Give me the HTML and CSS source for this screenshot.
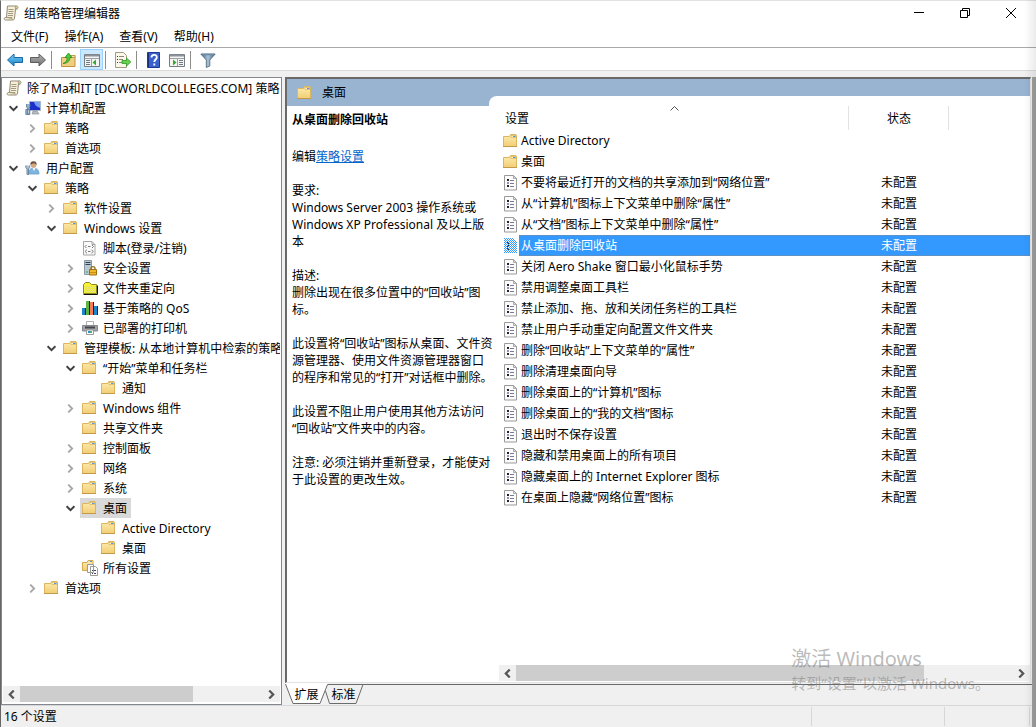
FILE: index.html
```html
<!DOCTYPE html>
<html lang="zh-CN">

<head>
  <meta charset="UTF-8">
  <meta name="viewport" content="width=device-width, initial-scale=1.0">
  <title>组策略管理编辑器</title>
  <link rel="stylesheet" href="styles.css">
</head>

<body>
  <!-- icon definitions -->
  <svg class="defs" aria-hidden="true">
    <defs>
      <linearGradient id="gFolder" x1="0" y1="0" x2="0" y2="1">
        <stop offset="0" stop-color="#fdedb0" />
        <stop offset="1" stop-color="#f2cd74" />
      </linearGradient>
      <linearGradient id="gBack" x1="0" y1="0" x2="0" y2="1">
        <stop offset="0" stop-color="#7fd0f5" />
        <stop offset="1" stop-color="#0f7fc4" />
      </linearGradient>
      <linearGradient id="gFwd" x1="0" y1="0" x2="0" y2="1">
        <stop offset="0" stop-color="#b5b5b5" />
        <stop offset="1" stop-color="#6f6f6f" />
      </linearGradient>
      <linearGradient id="gFilter" x1="0" y1="0" x2="1" y2="0">
        <stop offset="0" stop-color="#3f5f7d" />
        <stop offset="0.5" stop-color="#a9c3d8" />
        <stop offset="1" stop-color="#3f5f7d" />
      </linearGradient>
    </defs>
    <symbol id="scroll" viewBox="0 0 16 16">
      <path d="M4.500 1h9c2 0 2 3 0 3h-1l-1 9c0 1.500-1 2-2 2h-7c-2 0-1.500-2.500 0-2.500h1z" fill="#f7efd6" stroke="#8f8a78" />
      <path d="M13.500 1c-1.500 0-1.500 3-.5 3h1.500M2.500 12.500h6.500c-.5 1 0 2 .5 2.500" fill="#d8c690" stroke="#8f8a78" stroke-width=".8" />
      <path d="M5.500 4.500h5M5.500 6.500h5M5 8.500h5M5 10.500h5" stroke="#a09a86" />
    </symbol>
    <symbol id="folder" viewBox="0 0 16 16">
      <path d="M.5 3.500h6l1-2h5.500l.5 1v11H.5z" fill="url(#gFolder)" stroke="#dcb560" />
      <path d="M8 2.500h5v2H8z" fill="#fff3c9" stroke="#d3a84e" stroke-width=".6" />
      <path d="M10 3h2.500v1H10z" fill="#4a9be0" />
      <path d="M0 13.500h14" stroke="#c39a4a" />
    </symbol>
    <symbol id="doc" viewBox="0 0 14 16">
      <path d="M.5.500h9l3 3v11.500H.5z" fill="#fbfbfb" stroke="#9a9a9a" />
      <path d="M9.500.5v3h3z" fill="#ddd" stroke="#9a9a9a" stroke-width=".8" />
      <path d="M3 4h2v2H3zM3 10h2v2H3z" fill="#222" />
      <path d="M3 7h2v2H3z" fill="#9090b0" />
      <path d="M6 5.500h4M6 8.500h4M6 11.500h4" stroke="#777a98" />
    </symbol>
    <symbol id="docSel" viewBox="0 0 14 16">
      <path d="M0 0h10l3 3v12H0z" fill="#fff" />
      <path d="M3 4h2v2H3zM3 7h2v2H3zM3 10h2v2H3z" fill="#124" />
      <path d="M0 .5h10M0 2.500h12M0 4.500h13M0 6.500h13M0 8.500h13M0 10.500h13M0 12.500h13M0 14.500h13M1 1.500h10M1 3.500h12M1 5.500h12M1 7.500h12M1 9.500h12M1 11.500h12M1 13.500h12" stroke="#3399ff" stroke-dasharray="1 1" shape-rendering="crispEdges" />
    </symbol>
    <symbol id="computer" viewBox="0 0 16 16">
      <path d="M4.500 1.500h11v9h-11z" fill="#1c2fcb" stroke="#a8b4c8" />
      <path d="M9 2h6v6c-2-1-5-2-6-6z" fill="#6f9cf4" />
      <path d="M8 11h4l2 3H7z" fill="#b7bcc3" stroke="#7f8790" stroke-width=".6" />
      <path d="M1.500 4v3l1 1v6h1.500V8l1-1V4M.8 9.500h4v5h-4z" fill="#8fb3cf" stroke="#57758f" stroke-width=".8" />
    </symbol>
    <symbol id="user" viewBox="0 0 16 16">
      <path d="M4 14c0-5 2-6 4.500-6S14 9.500 14 14z" fill="#7db4e2" stroke="#6c9cc6" stroke-width=".8" />
      <path d="M7.500 8L9 11l1.500-3z" fill="#fff" />
      <circle cx="8.500" cy="5" r="2.800" fill="#d9a87b" />
      <path d="M5.500 5C5 2 7 1.200 8.500 1.300c2.500 0 3.500 1.500 3 4-1-2-3-2.500-6-.3z" fill="#6d5546" />
      <path d="M.8 5.500v2L2 9v5.500h1.500V9l1.200-1.500v-2" fill="#a7c2d8" stroke="#5f7f99" stroke-width=".9" />
    </symbol>
    <symbol id="script" viewBox="0 0 16 16">
      <path d="M1.500 1.500h8.500l3 3v10.500H1.500z" fill="#fafafa" stroke="#a4a4a4" />
      <path d="M10 1.500v3h3" fill="none" stroke="#a4a4a4" />
      <path d="M4.500 5L3 6.500 4.500 8M10 5l1.500 1.500L10 8M6 6.500h2.500M5 10c-2 0-2 3 0 3M9.500 10c2 0 2 3 0 3M6 11.500h2.500" fill="none" stroke="#777" />
    </symbol>
    <symbol id="security" viewBox="0 0 16 16">
      <path d="M2.500.5h7v14h-7z" fill="#b9c8d2" stroke="#8b99a3" />
      <path d="M3.500 2.500h5M3.500 4.500h5" stroke="#2f4554" />
      <path d="M4 12h2" stroke="#3ea33e" />
      <path d="M9 10V8.500c0-2.500 4-2.500 4 0V10" fill="none" stroke="#8c6a14" stroke-width="1.300" />
      <path d="M7.500 9.500h7v5.500h-7z" fill="#f0b92c" stroke="#a0700f" />
      <path d="M8 12.500h6" stroke="#c98f18" />
    </symbol>
    <symbol id="redirect" viewBox="0 0 16 16">
      <path d="M1.500 13.500v-9l2-2h4l2 2h5v9z" fill="#f6f03a" stroke="#8a8a20" />
      <path d="M3 6.500h11M3 8.500h11M3 10.500h11M3 12.500h11M4 7.500h10M4 9.500h10M4 11.500h10" stroke="#dcdc78" stroke-dasharray="1 1" shape-rendering="crispEdges" />
      <path d="M1.500 14.500h14v-9" fill="none" stroke="#111" />
    </symbol>
    <symbol id="qos" viewBox="0 0 16 16">
      <path d="M0 8h4v7H0z" fill="#1b87c9" />
      <path d="M4 1h4v14H4z" fill="#5cb543" />
      <path d="M8 2h4v13H8z" fill="#f47b54" />
      <path d="M12 6h4v9h-4z" fill="#1b87c9" />
      <path d="M3.500 8v7M7.500 1v14M11.500 2v13M15.500 6v9" stroke="#222" />
    </symbol>
    <symbol id="printer" viewBox="0 0 16 16">
      <path d="M4.500 1.500h7v4h-7z" fill="#fff" stroke="#b0b0b0" />
      <path d="M.5 5.500h15v5.500H.5z" fill="#a1a5a9" stroke="#85898d" />
      <path d="M3 7.500h10" stroke="#43474b" stroke-width="2" />
      <path d="M4.500 10h7v4.500h-7z" fill="#fff" stroke="#9a9a9a" />
      <path d="M6 11h2v2H6z" fill="#2f8fd5" />
      <path d="M8 11h2v2H8z" fill="#46b07c" />
    </symbol>
    <symbol id="allSettings" viewBox="0 0 16 16">
      <path d="M.5 2.500H5l1-2h5v10H.5z" fill="url(#gFolder)" stroke="#d3a84e" />
      <path d="M8 1.500h2" stroke="#4a9be0" />
      <path d="M5.500 4.500h6v8h-6zM8.500 6.500h5l2 2v7h-7z" fill="#fff" stroke="#9a9a9a" />
      <path d="M10 10.500h1M12 10.500h2M10 13.500h1M12 13.500h2" stroke="#445" />
    </symbol>
    <symbol id="open" viewBox="0 0 8 8">
      <path d="M.5 2L4 5.500 7.500 2" fill="none" stroke="#404040" stroke-width="1.800" />
    </symbol>
    <symbol id="closed" viewBox="0 0 8 8">
      <path d="M2 .5L5.500 4 2 7.500" fill="none" stroke="#a6a6a6" stroke-width="1.600" />
    </symbol>
    <symbol id="left" viewBox="0 0 8 8">
      <path d="M6 .5L2.500 4 6 7.500" fill="none" stroke="#555" stroke-width="2" />
    </symbol>
    <symbol id="right" viewBox="0 0 8 8">
      <path d="M2 .5L5.500 4 2 7.500" fill="none" stroke="#555" stroke-width="2" />
    </symbol>
  </svg>

  <header class="titlebar">
    <svg class="icon"><use href="#scroll" /></svg>
    <h1>组策略管理编辑器</h1>
    <div class="window-buttons">
      <button aria-label="最小化"><svg class="glyph" viewBox="0 0 12 12"><path d="M1 5.500h10" stroke="#000" /></svg></button>
      <button aria-label="向下还原"><svg class="glyph" viewBox="0 0 12 12"><path d="M1.500 3.500h7v7h-7zM3.500 3.500v-2h7v7h-2" fill="none" stroke="#000" /></svg></button>
      <button aria-label="关闭"><svg class="glyph" viewBox="0 0 12 12"><path d="M1 1l10 10M11 1L1 11" stroke="#000" /></svg></button>
    </div>
  </header>

  <nav class="menubar">
    <button>文件(F)</button>
    <button>操作(A)</button>
    <button>查看(V)</button>
    <button>帮助(H)</button>
  </nav>

  <div class="toolbar">
    <button aria-label="后退"><svg class="icon" viewBox="0 0 16 16"><path d="M.5 8L7 2v3.500h8.500v5H7V14z" fill="url(#gBack)" stroke="#1668a8" /></svg></button>
    <button aria-label="前进"><svg class="icon" viewBox="0 0 16 16"><path d="M15.500 8L9 2v3.500H.5v5H9V14z" fill="url(#gFwd)" stroke="#5c5c5c" /></svg></button>
    <span class="sep"></span>
    <button aria-label="上移一级"><svg class="icon" viewBox="0 0 16 16"><path d="M.5 5.500h6l1-2h6.500v11H.5z" fill="#efcf7f" stroke="#c0923c" /><path d="M8.500 3.500h5.500v2H8.500z" fill="#f8e5ae" stroke="#b98a3a" stroke-width=".7" /><path d="M2 11.500c3-1 4.500-3 4-6H4L7.500 1 11 5.500H9C9 9 6 11.500 2 11.500z" fill="#4fc93a" stroke="#1f8f1f" stroke-width=".8" /></svg></button>
    <button class="active" aria-label="显示控制台树"><svg class="icon" viewBox="0 0 16 16"><path d="M.5 2.500h15v12H.5z" fill="#f5f5f2" stroke="#777c82" /><path d="M1 3.500h14" stroke="#8a929a" stroke-width="2" /><path d="M1 6.500h14M7.500 7v7" stroke="#9aa0a6" /><path d="M2 8.500h4M2 10.500h4M2 12.500h4" stroke="#6d7a87" /><path d="M12 7.500v6L8.500 10.500z" fill="#32a832" /></svg></button>
    <span class="sep"></span>
    <button aria-label="导出列表"><svg class="icon" viewBox="0 0 16 16"><path d="M.5.5h8l3 3v12H.5z" fill="#fbf8ea" stroke="#a49c82" /><path d="M2 4.500h1M2 7.500h1M2 10.500h1" stroke="#333" /><path d="M4 4.500h5M4 7.500h4M4 10.500h3" stroke="#8b8770" /><path d="M7 8.500h4.500V6L15.800 10l-4.300 4v-2.500H7z" fill="#6bd04f" stroke="#2f9a27" stroke-width=".8" /></svg></button>
    <span class="sep"></span>
    <button aria-label="帮助"><svg class="icon" viewBox="0 0 16 16"><path d="M1.500.5h12v15h-12z" fill="#3b62cc" stroke="#1d3b96" /><path d="M2.500 1v14" stroke="#1a2f80" /><path d="M5.500 5.500C5.500 2 10.800 2 10.800 5.200c0 2.300-2.500 2.300-2.500 4.800M8.300 11.500v2" fill="none" stroke="#fff" stroke-width="1.800" /></svg></button>
    <button aria-label="显示操作窗格"><svg class="icon" viewBox="0 0 16 16"><path d="M.5 2.500h15v12H.5z" fill="#f5f5f2" stroke="#777c82" /><path d="M1 3.500h14" stroke="#8a929a" stroke-width="2" /><path d="M1 6.500h14M8.500 7v7" stroke="#9aa0a6" /><path d="M10 8.500h4M10 10.500h4M10 12.500h4" stroke="#6d7a87" /><path d="M4 7.500v6l3.500-3z" fill="#32a832" /></svg></button>
    <span class="sep"></span>
    <button aria-label="筛选器"><svg class="icon" viewBox="0 0 16 16"><path d="M.8 2h14.400L9.800 8v6l-3.500 1.500V8z" fill="url(#gFilter)" stroke="#4a6379" stroke-width=".8" /><path d="M2 2.500h12" stroke="#6c8ba5" stroke-width="1.500" /></svg></button>
  </div>

  <div class="frame">
    <div class="content">
      <main class="panes">
        <section class="tree-pane">
          <div class="tree">
            <div class="row"><span class="node"><svg class="icon"><use href="#scroll" /></svg>除了Ma和IT [DC.WORLDCOLLEGES.COM] 策略</span></div>
            <ul>
              <li>
                <div class="row"><button class="twisty" aria-label="折叠"><svg><use href="#open" /></svg></button><span class="node"><svg class="icon"><use href="#computer" /></svg>计算机配置</span></div>
                <ul>
                  <li><div class="row"><button class="twisty" aria-label="展开"><svg><use href="#closed" /></svg></button><span class="node"><svg class="icon"><use href="#folder" /></svg>策略</span></div></li>
                  <li><div class="row"><button class="twisty" aria-label="展开"><svg><use href="#closed" /></svg></button><span class="node"><svg class="icon"><use href="#folder" /></svg>首选项</span></div></li>
                </ul>
              </li>
              <li>
                <div class="row"><button class="twisty" aria-label="折叠"><svg><use href="#open" /></svg></button><span class="node"><svg class="icon"><use href="#user" /></svg>用户配置</span></div>
                <ul>
                  <li>
                    <div class="row"><button class="twisty" aria-label="折叠"><svg><use href="#open" /></svg></button><span class="node"><svg class="icon"><use href="#folder" /></svg>策略</span></div>
                    <ul>
                      <li><div class="row"><button class="twisty" aria-label="展开"><svg><use href="#closed" /></svg></button><span class="node"><svg class="icon"><use href="#folder" /></svg>软件设置</span></div></li>
                      <li>
                        <div class="row"><button class="twisty" aria-label="折叠"><svg><use href="#open" /></svg></button><span class="node"><svg class="icon"><use href="#folder" /></svg>Windows 设置</span></div>
                        <ul>
                          <li><div class="row leaf"><span class="node"><svg class="icon"><use href="#script" /></svg>脚本(登录/注销)</span></div></li>
                          <li><div class="row"><button class="twisty" aria-label="展开"><svg><use href="#closed" /></svg></button><span class="node"><svg class="icon"><use href="#security" /></svg>安全设置</span></div></li>
                          <li><div class="row"><button class="twisty" aria-label="展开"><svg><use href="#closed" /></svg></button><span class="node"><svg class="icon"><use href="#redirect" /></svg>文件夹重定向</span></div></li>
                          <li><div class="row"><button class="twisty" aria-label="展开"><svg><use href="#closed" /></svg></button><span class="node"><svg class="icon"><use href="#qos" /></svg>基于策略的 QoS</span></div></li>
                          <li><div class="row"><button class="twisty" aria-label="展开"><svg><use href="#closed" /></svg></button><span class="node"><svg class="icon"><use href="#printer" /></svg>已部署的打印机</span></div></li>
                        </ul>
                      </li>
                      <li>
                        <div class="row"><button class="twisty" aria-label="折叠"><svg><use href="#open" /></svg></button><span class="node"><svg class="icon"><use href="#folder" /></svg>管理模板: 从本地计算机中检索的策略</span></div>
                        <ul>
                          <li>
                            <div class="row"><button class="twisty" aria-label="折叠"><svg><use href="#open" /></svg></button><span class="node"><svg class="icon"><use href="#folder" /></svg>“开始”菜单和任务栏</span></div>
                            <ul>
                              <li><div class="row leaf"><span class="node"><svg class="icon"><use href="#folder" /></svg>通知</span></div></li>
                            </ul>
                          </li>
                          <li><div class="row"><button class="twisty" aria-label="展开"><svg><use href="#closed" /></svg></button><span class="node"><svg class="icon"><use href="#folder" /></svg>Windows 组件</span></div></li>
                          <li><div class="row leaf"><span class="node"><svg class="icon"><use href="#folder" /></svg>共享文件夹</span></div></li>
                          <li><div class="row"><button class="twisty" aria-label="展开"><svg><use href="#closed" /></svg></button><span class="node"><svg class="icon"><use href="#folder" /></svg>控制面板</span></div></li>
                          <li><div class="row"><button class="twisty" aria-label="展开"><svg><use href="#closed" /></svg></button><span class="node"><svg class="icon"><use href="#folder" /></svg>网络</span></div></li>
                          <li><div class="row"><button class="twisty" aria-label="展开"><svg><use href="#closed" /></svg></button><span class="node"><svg class="icon"><use href="#folder" /></svg>系统</span></div></li>
                          <li>
                            <div class="row"><button class="twisty" aria-label="折叠"><svg><use href="#open" /></svg></button><span class="node current"><svg class="icon"><use href="#folder" /></svg>桌面</span></div>
                            <ul>
                              <li><div class="row leaf"><span class="node"><svg class="icon"><use href="#folder" /></svg>Active Directory</span></div></li>
                              <li><div class="row leaf"><span class="node"><svg class="icon"><use href="#folder" /></svg>桌面</span></div></li>
                            </ul>
                          </li>
                          <li><div class="row leaf"><span class="node"><svg class="icon"><use href="#allSettings" /></svg>所有设置</span></div></li>
                        </ul>
                      </li>
                    </ul>
                  </li>
                  <li><div class="row"><button class="twisty" aria-label="展开"><svg><use href="#closed" /></svg></button><span class="node"><svg class="icon"><use href="#folder" /></svg>首选项</span></div></li>
                </ul>
              </li>
            </ul>
          </div>
          <div class="scrollbar">
            <button aria-label="向左滚动"><svg><use href="#left" /></svg></button>
            <div class="track"><div class="thumb" style="width: 71%"></div></div>
            <button aria-label="向右滚动"><svg><use href="#right" /></svg></button>
          </div>
        </section>

        <section class="result-pane">
          <div class="view">
            <h2 class="banner"><svg class="icon"><use href="#folder" /></svg>桌面</h2>
            <div class="split">
              <article class="details">
                <h3>从桌面删除回收站</h3>
                <p class="edit">编辑<a href="#">策略设置</a></p>
                <p>要求:<br>Windows Server 2003 操作系统或<br>Windows XP Professional 及以上版<br>本</p>
                <p>描述:<br>删除出现在很多位置中的“回收站”图<br>标。</p>
                <p>此设置将“回收站”图标从桌面、文件资<br>源管理器、使用文件资源管理器窗口<br>的程序和常见的“打开”对话框中删除。</p>
                <p>此设置不阻止用户使用其他方法访问<br>“回收站”文件夹中的内容。</p>
                <p>注意: 必须注销并重新登录，才能使对<br>于此设置的更改生效。</p>
              </article>
              <div class="list-pane">
                <table>
                  <colgroup>
                    <col class="col-name">
                    <col class="col-state">
                    <col>
                  </colgroup>
                  <thead>
                    <tr>
                      <th>设置<svg class="sort" viewBox="0 0 9 5"><path d="M.5 4.500l4-4 4 4" fill="none" stroke="#555" /></svg></th>
                      <th class="state">状态</th>
                      <th></th>
                    </tr>
                  </thead>
                  <tbody>
                    <tr><td><div class="name"><svg class="icon"><use href="#folder" /></svg><span>Active Directory</span></div></td><td class="state"></td><td></td></tr>
                    <tr><td><div class="name"><svg class="icon"><use href="#folder" /></svg><span>桌面</span></div></td><td class="state"></td><td></td></tr>
                    <tr><td><div class="name"><svg class="icon"><use href="#doc" /></svg><span>不要将最近打开的文档的共享添加到“网络位置”</span></div></td><td class="state">未配置</td><td></td></tr>
                    <tr><td><div class="name"><svg class="icon"><use href="#doc" /></svg><span>从“计算机”图标上下文菜单中删除“属性”</span></div></td><td class="state">未配置</td><td></td></tr>
                    <tr><td><div class="name"><svg class="icon"><use href="#doc" /></svg><span>从“文档”图标上下文菜单中删除“属性”</span></div></td><td class="state">未配置</td><td></td></tr>
                    <tr class="selected"><td><div class="name"><svg class="icon"><use href="#docSel" /></svg><span>从桌面删除回收站</span></div></td><td class="state">未配置</td><td></td></tr>
                    <tr><td><div class="name"><svg class="icon"><use href="#doc" /></svg><span>关闭 Aero Shake 窗口最小化鼠标手势</span></div></td><td class="state">未配置</td><td></td></tr>
                    <tr><td><div class="name"><svg class="icon"><use href="#doc" /></svg><span>禁用调整桌面工具栏</span></div></td><td class="state">未配置</td><td></td></tr>
                    <tr><td><div class="name"><svg class="icon"><use href="#doc" /></svg><span>禁止添加、拖、放和关闭任务栏的工具栏</span></div></td><td class="state">未配置</td><td></td></tr>
                    <tr><td><div class="name"><svg class="icon"><use href="#doc" /></svg><span>禁止用户手动重定向配置文件文件夹</span></div></td><td class="state">未配置</td><td></td></tr>
                    <tr><td><div class="name"><svg class="icon"><use href="#doc" /></svg><span>删除“回收站”上下文菜单的“属性”</span></div></td><td class="state">未配置</td><td></td></tr>
                    <tr><td><div class="name"><svg class="icon"><use href="#doc" /></svg><span>删除清理桌面向导</span></div></td><td class="state">未配置</td><td></td></tr>
                    <tr><td><div class="name"><svg class="icon"><use href="#doc" /></svg><span>删除桌面上的“计算机”图标</span></div></td><td class="state">未配置</td><td></td></tr>
                    <tr><td><div class="name"><svg class="icon"><use href="#doc" /></svg><span>删除桌面上的“我的文档”图标</span></div></td><td class="state">未配置</td><td></td></tr>
                    <tr><td><div class="name"><svg class="icon"><use href="#doc" /></svg><span>退出时不保存设置</span></div></td><td class="state">未配置</td><td></td></tr>
                    <tr><td><div class="name"><svg class="icon"><use href="#doc" /></svg><span>隐藏和禁用桌面上的所有项目</span></div></td><td class="state">未配置</td><td></td></tr>
                    <tr><td><div class="name"><svg class="icon"><use href="#doc" /></svg><span>隐藏桌面上的 Internet Explorer 图标</span></div></td><td class="state">未配置</td><td></td></tr>
                    <tr><td><div class="name"><svg class="icon"><use href="#doc" /></svg><span>在桌面上隐藏“网络位置”图标</span></div></td><td class="state">未配置</td><td></td></tr>
                  </tbody>
                </table>
                <div class="scrollbar">
                  <button aria-label="向左滚动"><svg><use href="#left" /></svg></button>
                  <div class="track"><div class="thumb" style="width: 82%"></div></div>
                  <button aria-label="向右滚动"><svg><use href="#right" /></svg></button>
                </div>
              </div>
            </div>
          </div>
          <div class="tabs">
            <svg class="tab-shape" viewBox="0 0 80 22">
              <path d="M0 0h43L35 20H8z" fill="#fff" />
              <path d="M.5 1l7.500 19.500h27L42.500 1.500H80" fill="none" stroke="#6b6b6b" />
              <path d="M40.500 8l4 12.500H71L78 1.500" fill="none" stroke="#6b6b6b" />
            </svg>
            <button>扩展</button>
            <button>标准</button>
          </div>
        </section>
      </main>

      <footer class="statusbar">
        <span class="message">16 个设置</span>
        <span class="cell wide"></span>
        <span class="cell"></span>
      </footer>
    </div>
    <div class="edge"></div>
  </div>

  <div class="watermark">
    <p class="big">激活 Windows</p>
    <p>转到“设置”以激活 Windows。</p>
  </div>
</body>

</html>
```

FILE: styles.css
```css
* {
  margin: 0;
  padding: 0;
  box-sizing: border-box;
}

body {
  display: flex;
  flex-direction: column;
  height: 100vh;
  overflow: hidden;
  border-top: 1px solid #e2e2e2;
  border-left: 1px solid #666;
  background: #fff;
  color: #000;
  font-family: "Noto Sans", "Noto Sans CJK SC", sans-serif;
  font-size: 12px;
  line-height: 17px;
}

/* soft shadow along the right side */
body::after {
  content: "";
  position: fixed;
  top: 0;
  right: 0;
  bottom: 0;
  width: 12px;
  background: linear-gradient(to right, transparent, rgba(0, 0, 0, 0.08));
  pointer-events: none;
}

button {
  display: flex;
  align-items: center;
  justify-content: center;
  border: none;
  background: none;
  color: inherit;
  font: inherit;
}

ul {
  list-style: none;
}

h1,
h2 {
  font-size: 12px;
  font-weight: 400;
}

.defs {
  position: absolute;
  width: 0;
  height: 0;
}

.icon {
  flex: none;
  width: 16px;
  height: 16px;
}

/* Title bar */
.titlebar {
  display: flex;
  align-items: center;
  height: 24px;
  padding-left: 2px;
  gap: 5px;
}

.window-buttons {
  display: flex;
  margin-left: auto;
  padding-right: 2px;
}

.window-buttons button {
  width: 46px;
  height: 22px;
}

.glyph {
  width: 12px;
  height: 12px;
}

/* Menu */
.menubar {
  display: flex;
  height: 22px;
  padding-left: 10px;
  gap: 16px;
}

/* Toolbar */
.toolbar {
  display: flex;
  align-items: center;
  height: 24px;
  padding: 1px 0 0 2px;
  border-top: 1px solid #a9a9a9;
  border-bottom: 1px solid #dadada;
}

.toolbar button {
  width: 23px;
  height: 21px;
  border: 1px solid transparent;
}

.toolbar .active {
  border-color: #99d1ff;
  background: #cce8ff;
}

.sep {
  width: 1px;
  height: 18px;
  margin: 0 5px 0 2px;
  background: #8d8d8d;
}

/* Main area */
.frame {
  display: flex;
  flex: 1;
  min-height: 0;
  padding-top: 6px;
  background: #f0f0f0;
}

.content {
  display: flex;
  flex: 1;
  flex-direction: column;
  min-width: 0;
}

.edge {
  width: 4px;
  background: #a0a0a0;
}

.panes {
  display: flex;
  flex: 1;
  min-height: 0;
  gap: 3px;
}

/* Tree */
.tree-pane {
  display: flex;
  flex: none;
  flex-direction: column;
  width: 281px;
  padding: 0 1px 2px;
  border: 1px solid #828790;
  background: #fff;
}

.tree {
  flex: 1;
  min-height: 0;
  padding-left: 1px;
  overflow: hidden;
  white-space: nowrap;
}

.tree ul ul {
  padding-left: 19px;
}

.row {
  display: flex;
  height: 20px;
}

.leaf {
  padding-left: 19px;
}

.twisty {
  flex: none;
  width: 19px;
}

.twisty svg,
.scrollbar svg {
  width: 9px;
  height: 9px;
}

.node {
  display: flex;
  align-items: center;
  padding: 0 4px 0 2px;
  gap: 5px;
}

.current {
  background: #d9d9d9;
}

/* Scroll bars */
.scrollbar {
  display: flex;
  height: 16px;
  background: #f0f0f0;
}

.scrollbar button {
  width: 17px;
}

.track {
  flex: 1;
}

.thumb {
  height: 100%;
  background: #cdcdcd;
}

/* Result pane */
.result-pane {
  display: flex;
  flex: 1;
  flex-direction: column;
  min-width: 0;
}

.view {
  display: flex;
  flex: 1;
  flex-direction: column;
  min-height: 0;
  margin-right: 1px;
  border: 1px solid #e3e3e3;
  border-top: 2px solid #696969;
  border-left: 2px solid #696969;
  background: #fff;
}

.banner {
  display: flex;
  align-items: center;
  height: 27px;
  padding-left: 10px;
  gap: 9px;
  background: #99b4d1;
}

.split {
  display: flex;
  flex: 1;
  min-height: 0;
}

.details {
  position: relative;
  z-index: 1;
  flex: none;
  width: 212px;
  padding: 5px 0 0 5px;
  white-space: nowrap;
}

.details h3 {
  font-size: 12px;
  font-weight: 700;
}

.details p {
  margin-top: 17px;
}

.details .edit {
  margin-top: 20px;
}

.details a {
  color: #0066cc;
}

.list-pane {
  display: flex;
  flex: 1;
  flex-direction: column;
  justify-content: space-between;
  min-width: 0;
  margin: -10px 0 0 -10px;
  padding: 10px 0 1px 10px;
  border-top-left-radius: 8px;
  background: #fff;
}

table {
  width: 100%;
  border-collapse: collapse;
  table-layout: fixed;
}

.col-name {
  width: 350px;
}

.col-state {
  width: 100px;
}

th {
  position: relative;
  height: 24px;
  padding-left: 6px;
  font-weight: 400;
  text-align: left;
  box-shadow: inset -1px 0 #e2e2e2;
}

th:last-child {
  box-shadow: none;
}

td {
  height: 21px;
  white-space: nowrap;
}

.state {
  padding: 0;
  text-align: center;
}

.sort {
  position: absolute;
  top: 0;
  left: 50%;
  width: 9px;
  height: 5px;
  margin-left: -4px;
}

.name {
  display: flex;
  align-items: center;
  height: 21px;
  padding-left: 4px;
}

.name span {
  flex: 1;
  padding-left: 2px;
  line-height: 21px;
}

.selected {
  color: #fff;
}

.selected span,
.selected td + td {
  background: #3399ff;
  box-shadow: inset 0 1px #5c92c8, inset 0 -1px #5c92c8;
}

/* Tabs under the result pane */
.tabs {
  position: relative;
  display: flex;
  height: 22px;
  padding-left: 8px;
  gap: 10px;
  background: linear-gradient(#696969, #696969) 80px 1px / 100% 1px no-repeat;
}

.tabs button {
  position: relative;
  width: 27px;
  white-space: nowrap;
}

.tab-shape {
  position: absolute;
  top: 0;
  left: 0;
  width: 80px;
  height: 22px;
}

/* Status bar */
.statusbar {
  display: flex;
  height: 22px;
  padding: 1px 2px 1px 3px;
  border-top: 1px solid #d7d7d7;
}

.message {
  flex: 1;
  border-right: 1px solid #d7d7d7;
  line-height: 20px;
}

.cell {
  width: 85px;
  border-right: 1px solid #d7d7d7;
}

.wide {
  width: 133px;
}

/* Activation notice */
.watermark {
  position: absolute;
  right: 46px;
  bottom: 32px;
  color: rgba(120, 120, 120, 0.5);
  font-size: 15px;
  line-height: 24px;
  pointer-events: none;
}

.big {
  font-size: 20px;
}
```
